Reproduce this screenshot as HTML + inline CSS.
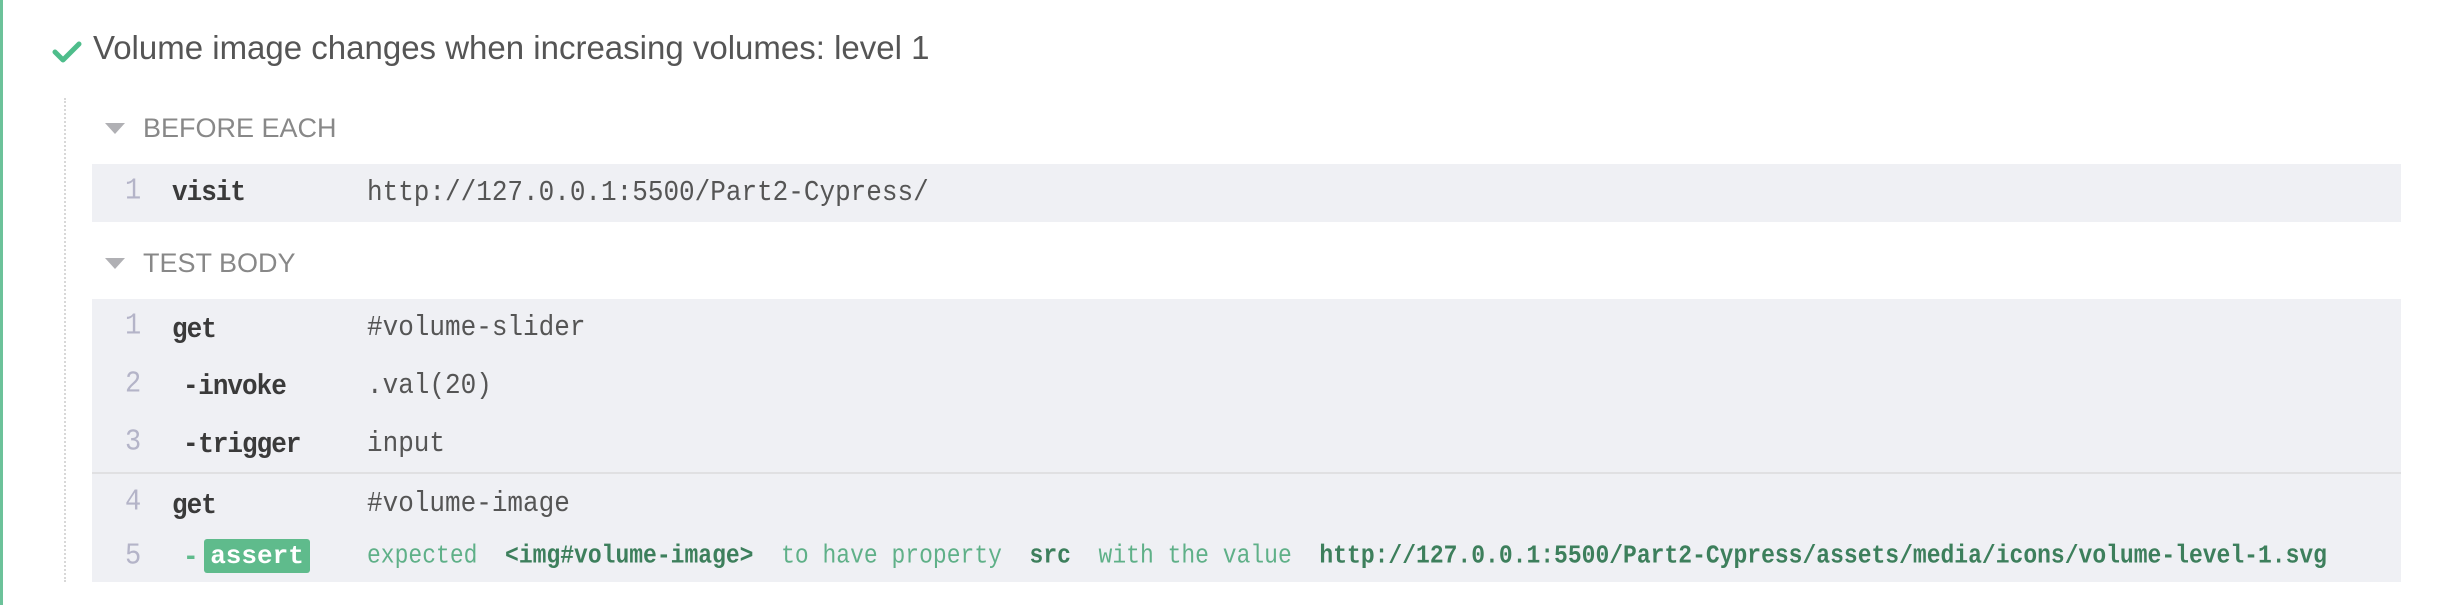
<!DOCTYPE html>
<html><head><meta charset="utf-8"><style>
body{margin:0;width:2437px;height:605px;background:#fff;position:relative;overflow:hidden;font-family:"Liberation Sans",sans-serif}
.a{position:absolute;white-space:pre}
.mono{font-family:"Liberation Mono",monospace}
.bg{position:absolute;left:92px;width:2309px;background:#eff0f4}
.ln{position:absolute;left:125px;color:#b4b4c8;font-size:27px;font-family:"Liberation Mono",monospace;transform:scaleY(1.12);transform-origin:0 50%}
.cmd{position:absolute;left:172px;color:#3a3a3a;font-weight:bold;font-size:26px;letter-spacing:-1px;font-family:"Liberation Mono",monospace;white-space:pre;transform:scaleY(1.12);transform-origin:0 50%}
.msg{position:absolute;left:367px;color:#555;font-size:26px;font-family:"Liberation Mono",monospace;white-space:pre;transform:scaleY(1.12);transform-origin:0 50%}
.hd{position:absolute;left:143px;color:#888;font-size:27px}
.tri{position:absolute;left:105px;width:0;height:0;border-left:10px solid transparent;border-right:10px solid transparent;border-top:11px solid #b0b0b4}
</style></head><body>
<div style="position:absolute;left:0;top:0;width:3px;height:605px;background:#6cc29a"></div>
<svg style="position:absolute;left:52px;top:40px" width="30" height="24" viewBox="0 0 30 24"><path d="M3 12 L11 20 L27 4" fill="none" stroke="#4ebd8b" stroke-width="5" stroke-linecap="round" stroke-linejoin="round"/></svg>
<div class="a" style="left:93px;top:29px;font-size:33px;color:#555">Volume image changes when increasing volumes: level 1</div>
<div style="position:absolute;left:64px;top:98px;height:484px;border-left:2px dotted #d8d8d8"></div>

<div class="tri" style="top:123px"></div>
<div class="hd" style="top:113px">BEFORE EACH</div>
<div class="bg" style="top:164px;height:58px"></div>
<div class="ln" style="top:177px">1</div>
<div class="cmd" style="top:177px">visit</div>
<div class="msg" style="top:177px">http://127.0.0.1:5500/Part2-Cypress/</div>

<div class="tri" style="top:258px"></div>
<div class="hd" style="top:248px">TEST BODY</div>
<div class="bg" style="top:299px;height:283px"></div>
<div style="position:absolute;left:92px;top:472px;width:2309px;height:2px;background:#e0e0e2"></div>

<div class="ln" style="top:312px">1</div>
<div class="cmd" style="top:314px">get</div>
<div class="msg" style="top:312px">#volume-slider</div>

<div class="ln" style="top:370px">2</div>
<div class="cmd" style="top:371px;left:183px">-&#8202;invoke</div>
<div class="msg" style="top:370px">.val(20)</div>

<div class="ln" style="top:428px">3</div>
<div class="cmd" style="top:429px;left:183px">-&#8202;trigger</div>
<div class="msg" style="top:428px">input</div>

<div class="ln" style="top:488px">4</div>
<div class="cmd" style="top:490px">get</div>
<div class="msg" style="top:488px">#volume-image</div>

<div class="ln" style="top:542px">5</div>
<div class="cmd" style="top:542px;left:183px;color:#5fbb8c">-</div>
<div class="a" style="left:204px;top:539px;width:106px;height:34px;background:#5fbb8c;border-radius:3px;color:#fff;font-weight:bold;font-size:26px;font-family:'Liberation Mono',monospace;text-align:center;line-height:34px">assert</div>
<div class="a mono" style="left:367px;top:543px;font-size:23px;color:#5fb088;transform:scaleY(1.12);transform-origin:0 50%">expected  <b style="color:#3d7f5c">&lt;img#volume-image&gt;</b>  to have property  <b style="color:#3d7f5c">src</b>  with the value  <b style="color:#3d7f5c">http://127.0.0.1:5500/Part2-Cypress/assets/media/icons/volume-level-1.svg</b></div>
</body></html>
